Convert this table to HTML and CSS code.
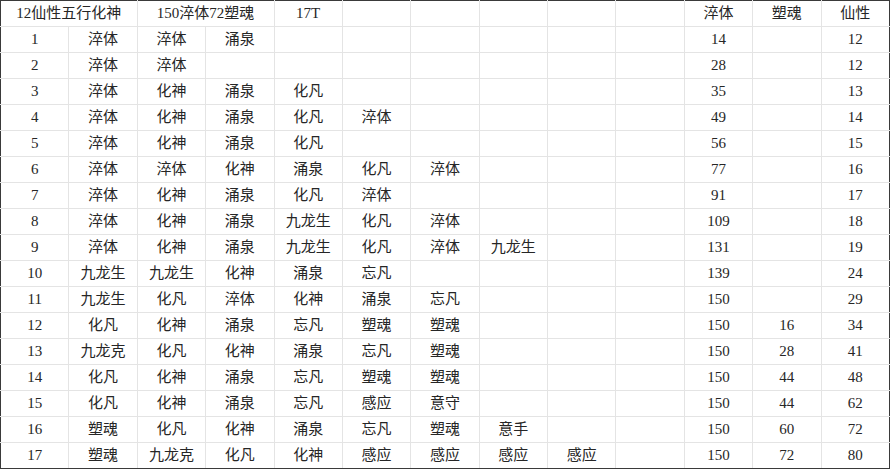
FILE: index.html
```html
<!DOCTYPE html>
<html lang="zh">
<head>
<meta charset="utf-8">
<link rel="stylesheet" href="styles.css">
</head>
<body>
<table class="sheet">
<colgroup>
<col><col><col><col><col><col><col><col><col><col><col><col><col>
</colgroup>
<tr><td colspan="2">12仙性五行化神</td><td colspan="2">150淬体72塑魂</td><td>17T</td><td></td><td></td><td></td><td></td><td></td><td class="sep">淬体</td><td>塑魂</td><td>仙性</td></tr>
<tr><td>1</td><td>淬体</td><td>淬体</td><td>涌泉</td><td></td><td></td><td></td><td></td><td></td><td></td><td class="sep">14</td><td></td><td>12</td></tr>
<tr><td>2</td><td>淬体</td><td>淬体</td><td></td><td></td><td></td><td></td><td></td><td></td><td></td><td class="sep">28</td><td></td><td>12</td></tr>
<tr><td>3</td><td>淬体</td><td>化神</td><td>涌泉</td><td>化凡</td><td></td><td></td><td></td><td></td><td></td><td class="sep">35</td><td></td><td>13</td></tr>
<tr><td>4</td><td>淬体</td><td>化神</td><td>涌泉</td><td>化凡</td><td>淬体</td><td></td><td></td><td></td><td></td><td class="sep">49</td><td></td><td>14</td></tr>
<tr><td>5</td><td>淬体</td><td>化神</td><td>涌泉</td><td>化凡</td><td></td><td></td><td></td><td></td><td></td><td class="sep">56</td><td></td><td>15</td></tr>
<tr><td>6</td><td>淬体</td><td>淬体</td><td>化神</td><td>涌泉</td><td>化凡</td><td>淬体</td><td></td><td></td><td></td><td class="sep">77</td><td></td><td>16</td></tr>
<tr><td>7</td><td>淬体</td><td>化神</td><td>涌泉</td><td>化凡</td><td>淬体</td><td></td><td></td><td></td><td></td><td class="sep">91</td><td></td><td>17</td></tr>
<tr><td>8</td><td>淬体</td><td>化神</td><td>涌泉</td><td>九龙生</td><td>化凡</td><td>淬体</td><td></td><td></td><td></td><td class="sep">109</td><td></td><td>18</td></tr>
<tr><td>9</td><td>淬体</td><td>化神</td><td>涌泉</td><td>九龙生</td><td>化凡</td><td>淬体</td><td>九龙生</td><td></td><td></td><td class="sep">131</td><td></td><td>19</td></tr>
<tr><td>10</td><td>九龙生</td><td>九龙生</td><td>化神</td><td>涌泉</td><td>忘凡</td><td></td><td></td><td></td><td></td><td class="sep">139</td><td></td><td>24</td></tr>
<tr><td>11</td><td>九龙生</td><td>化凡</td><td>淬体</td><td>化神</td><td>涌泉</td><td>忘凡</td><td></td><td></td><td></td><td class="sep">150</td><td></td><td>29</td></tr>
<tr><td>12</td><td>化凡</td><td>化神</td><td>涌泉</td><td>忘凡</td><td>塑魂</td><td>塑魂</td><td></td><td></td><td></td><td class="sep">150</td><td>16</td><td>34</td></tr>
<tr><td>13</td><td>九龙克</td><td>化凡</td><td>化神</td><td>涌泉</td><td>忘凡</td><td>塑魂</td><td></td><td></td><td></td><td class="sep">150</td><td>28</td><td>41</td></tr>
<tr><td>14</td><td>化凡</td><td>化神</td><td>涌泉</td><td>忘凡</td><td>塑魂</td><td>塑魂</td><td></td><td></td><td></td><td class="sep">150</td><td>44</td><td>48</td></tr>
<tr><td>15</td><td>化凡</td><td>化神</td><td>涌泉</td><td>忘凡</td><td>感应</td><td>意守</td><td></td><td></td><td></td><td class="sep">150</td><td>44</td><td>62</td></tr>
<tr><td>16</td><td>塑魂</td><td>化凡</td><td>化神</td><td>涌泉</td><td>忘凡</td><td>塑魂</td><td>意手</td><td></td><td></td><td class="sep">150</td><td>60</td><td>72</td></tr>
<tr><td>17</td><td>塑魂</td><td>九龙克</td><td>化凡</td><td>化神</td><td>感应</td><td>感应</td><td>感应</td><td>感应</td><td></td><td class="sep">150</td><td>72</td><td>80</td></tr>
</table>
</body>
</html>
```
FILE: styles.css
```css
html, body {
  margin: 0;
  padding: 0;
  background: #ffffff;
}
.sheet {
  width: 890px;
  table-layout: fixed;
  border-collapse: collapse;
  border: 1px solid #3a3a3a;
  font-family: "Liberation Serif", "Noto Sans CJK SC", serif;
  font-size: 15px;
  color: #262626;
}
.sheet td {
  height: 25px;
  padding: 0;
  border: 1px solid #e4e4e4;
  text-align: center;
  vertical-align: middle;
  white-space: nowrap;
  line-height: 25px;
}
.sheet tr:first-child td {
  border-top: 1px solid #3a3a3a;
}
.sheet tr:last-child td {
  border-bottom: 1px solid #3a3a3a;
}
.sheet td:first-child {
  border-left: 1px solid #3a3a3a;
}
.sheet td:last-child {
  border-right: 1px solid #3a3a3a;
}
.sheet td.sep {
  border-left: 1px solid #3a3a3a;
}
```
